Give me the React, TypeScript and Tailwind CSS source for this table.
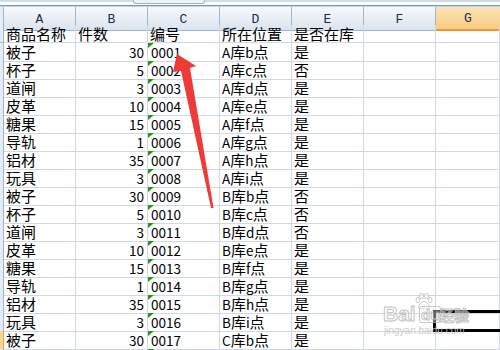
import React from "react";

type Row = [string, string, string, string, string];

const HEAD: Row = ["商品名称", "件数", "编号", "所在位置", "是否在库"];

const ROWS: Row[] = [
  ["被子", "30", "0001", "A库b点", "是"],
  ["杯子", "5", "0002", "A库c点", "否"],
  ["道闸", "3", "0003", "A库d点", "是"],
  ["皮革", "10", "0004", "A库e点", "是"],
  ["糖果", "15", "0005", "A库f点", "是"],
  ["导轨", "1", "0006", "A库g点", "是"],
  ["铝材", "35", "0007", "A库h点", "是"],
  ["玩具", "3", "0008", "A库i点", "是"],
  ["被子", "30", "0009", "B库b点", "否"],
  ["杯子", "5", "0010", "B库c点", "否"],
  ["道闸", "3", "0011", "B库d点", "否"],
  ["皮革", "10", "0012", "B库e点", "是"],
  ["糖果", "15", "0013", "B库f点", "是"],
  ["导轨", "1", "0014", "B库g点", "是"],
  ["铝材", "35", "0015", "B库h点", "是"],
  ["玩具", "3", "0016", "B库i点", "是"],
  ["被子", "30", "0017", "C库b点", "是"],
  ["", "", "", "", ""],
];

const LETTERS = ["A", "B", "C", "D", "E", "F", "G"];

// Half-width runs are set a little smaller so they take half a CJK cell.
function Mixed({ text }: { text: string }) {
  const parts = text.split(/([\x00-\x7f]+)/).filter(Boolean);
  return (
    <>
      {parts.map((p, i) =>
        /^[\x00-\x7f]+$/.test(p) ? (
          <span key={i} className="text-[13.5px]">
            {p}
          </span>
        ) : (
          <span key={i}>{p}</span>
        )
      )}
    </>
  );
}

function Cell({
  children,
  right,
  flag,
}: {
  children?: React.ReactNode;
  right?: boolean;
  flag?: boolean;
}) {
  return (
    <div
      className={
        right
          ? "relative whitespace-nowrap border-b border-r border-[#d0d7e5] pr-[3px] text-right leading-[17px]"
          : "relative whitespace-nowrap border-b border-r border-[#d0d7e5] pl-[2px] leading-[17px]"
      }
    >
      {flag && (
        <span className="absolute left-0 top-0 h-[5px] w-[6px] bg-[#1f9a1f] [clip-path:polygon(0_0,100%_0,0_100%)]" />
      )}
      {children}
    </div>
  );
}

function DataRow({ row, index }: { row: Row; index: number }) {
  const selected = index === 16;
  const isHead = index === -1;
  return (
    <div className="grid h-[18px] grid-cols-[4px_72px_72px_72px_72px_72px_72px_1fr]">
      <div
        className={
          selected
            ? "border-b border-r border-[#e5a546] bg-[#f9d596]"
            : "border-b border-r border-[#9eb6ce] bg-[#e4ecf7]"
        }
      />
      <Cell>
        <Mixed text={row[0]} />
      </Cell>
      <Cell right={!isHead}>
        <Mixed text={row[1]} />
      </Cell>
      <Cell flag={!isHead}>
        <span className={isHead ? "" : "pl-[1px]"}>
          <Mixed text={row[2]} />
        </span>
      </Cell>
      <Cell>
        <Mixed text={row[3]} />
      </Cell>
      <Cell>
        <Mixed text={row[4]} />
      </Cell>
      <Cell />
      <Cell />
    </div>
  );
}

export default function App() {
  return (
    <div className="relative h-[350px] w-[500px] overflow-hidden bg-white font-['Noto_Sans_CJK_SC',sans-serif] text-[15px] text-black">
      {/* strip under the formula bar */}
      <div className="relative h-[7px]">
        <div className="h-[2px] bg-[#cfdcec]" />
        <div className="h-[3px] bg-white" />
        <div className="h-[1px] bg-[#7395c6]" />
        <div className="h-[1px] bg-[#c6d5e9]" />
        <div className="absolute left-[133px] top-0 h-[4px] w-[72px] rounded-b-[3px] border border-t-0 border-[#a3b3c6] bg-[#eef2f7]" />
      </div>

      {/* column headers */}
      <div className="grid h-[18px] grid-cols-[4px_72px_72px_72px_72px_72px_72px_1fr]">
        <div className="border-b border-r border-[#9eb6ce] bg-[#e4ecf7]" />
        {LETTERS.map((l) =>
          l === "G" ? (
            <div
              key={l}
              className="flex items-center justify-center border-b-2 border-[#f29536] bg-gradient-to-b from-[#fbe3b6] to-[#f7cd80] pt-[2px] font-['Liberation_Mono',monospace] text-[13px] text-[#15304c]"
            >
              {l}
            </div>
          ) : (
            <div
              key={l}
              className="flex items-center justify-center border-b border-r border-[#9eb6ce] bg-gradient-to-b from-[#f7f9fc] to-[#dbe3ee] pt-[2px] font-['Liberation_Mono',monospace] text-[13px] text-[#15304c]"
            >
              {l}
            </div>
          )
        )}
      </div>

      {/* sheet body */}
      <DataRow row={HEAD} index={-1} />
      {ROWS.map((r, i) => (
        <DataRow key={i} row={r} index={i} />
      ))}

      {/* active cell G17 */}
      <div className="absolute left-[433px] top-[310px] h-[22px] w-[90px] border-[3px] border-black" />

      {/* red arrow */}
      <svg
        className="pointer-events-none absolute left-0 top-0"
        width="500"
        height="350"
        viewBox="0 0 500 350"
      >
        <polygon
          points="177,54 196,66 190,68 213.5,208 211,208 181,71 173,72"
          fill="#ef3a3a"
        />
      </svg>

      {/* site watermark */}
      <div className="pointer-events-none absolute left-[383px] top-[292px] h-[46px] w-[92px] opacity-85">
        <svg className="absolute left-[32px] top-[1px]" width="18" height="17" viewBox="0 0 18 17">
          <g fill="rgba(255,255,255,0.6)" stroke="#bdbdbd" strokeWidth="1">
            <ellipse cx="3" cy="7" rx="2" ry="2.6" />
            <ellipse cx="6.5" cy="3" rx="2" ry="2.6" />
            <ellipse cx="11.5" cy="3" rx="2" ry="2.6" />
            <ellipse cx="15" cy="7" rx="2" ry="2.6" />
            <path d="M9 8.5c-3 0-5.5 4-5.5 6 0 1.5 2 1.8 5.5 1.2 3.5.6 5.5.3 5.5-1.2 0-2-2.5-6-5.5-6z" />
          </g>
        </svg>
        <span className="absolute left-0 top-[12px] font-['Liberation_Sans',sans-serif] text-[21px] font-bold leading-[20px] text-white/60 [-webkit-text-stroke:1px_#b9b9b9]">
          Bai
        </span>
        <span className="absolute left-[36px] top-[14px] rounded-[3px] border border-[#bdbdbd] bg-white/40 px-[1px] font-['Liberation_Sans',sans-serif] text-[15px] font-bold leading-[15px] text-white/60 [-webkit-text-stroke:1px_#b9b9b9]">
          du
        </span>
        <span className="absolute left-[56px] top-[15px] font-['Noto_Sans_CJK_SC',sans-serif] text-[15px] font-bold leading-[16px] text-white/50 [-webkit-text-stroke:1px_#b9b9b9]">
          经验
        </span>
        <span className="absolute left-[1px] top-[34px] font-['Liberation_Sans',sans-serif] text-[10px] leading-[10px] text-[#c4c4c4]">
          jingyan.baidu.com
        </span>
      </div>
    </div>
  );
}
